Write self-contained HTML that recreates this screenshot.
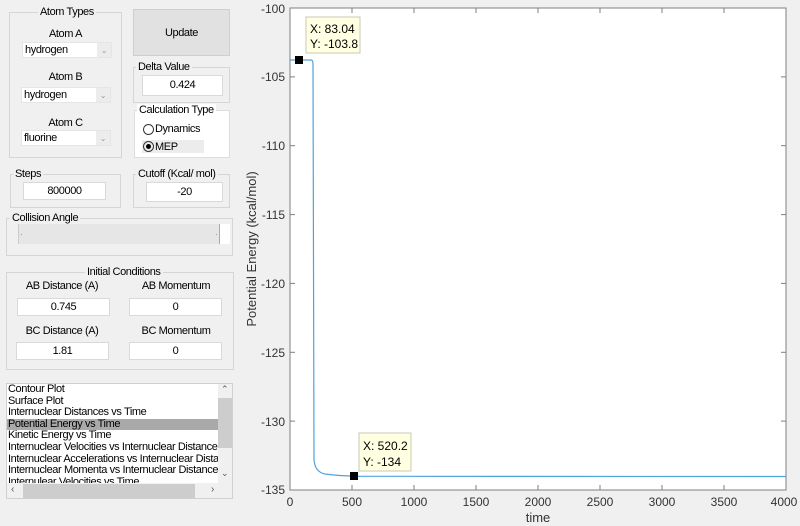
<!DOCTYPE html>
<html><head><style>
body{margin:0;width:800px;height:526px;background:#f0f0f0;font-family:"Liberation Sans",sans-serif;font-size:11px;letter-spacing:-0.4px;color:#000;position:relative;overflow:hidden}
.a{position:absolute}
.grp{position:absolute;border:1px solid #d5d5d5;box-sizing:border-box}
.lg{position:absolute;background:#f0f0f0;padding:0 2px;top:-7px;font-size:11px}
.ed{position:absolute;background:#fff;border:1px solid #d9d9d9;box-sizing:border-box;text-align:center;font-size:11px;line-height:19px}
.dd{position:absolute;background:#fff;border:1px solid #e5e5e5;box-sizing:border-box;font-size:11px;line-height:15px;padding-left:2px}
.dd:after{content:"";position:absolute;right:0;top:0;width:14px;height:100%;background:#ececec}
.dd span{position:absolute;right:4px;top:0;z-index:1;color:#999;font-size:8px}
.c{text-align:center}
</style></head><body>
<div class="grp" style="left:9px;top:12px;width:113px;height:146px"><div class="lg" style="left:28px">Atom Types</div></div>
<div class="a c" style="left:9px;top:28px;width:113px">Atom A</div>
<div class="dd" style="left:22px;top:42px;width:90px;height:16px">hydrogen<span>&#8964;</span></div>
<div class="a c" style="left:9px;top:71px;width:113px">Atom B</div>
<div class="dd" style="left:21px;top:87px;width:90px;height:16px">hydrogen<span>&#8964;</span></div>
<div class="a c" style="left:9px;top:117px;width:113px">Atom C</div>
<div class="dd" style="left:21px;top:130px;width:90px;height:16px">fluorine<span>&#8964;</span></div>
<div class="a c" style="left:133px;top:9px;width:97px;height:47px;background:#e1e1e1;border:1px solid #cfcfcf;box-sizing:border-box;line-height:46px">Update</div>
<div class="grp" style="left:133px;top:67px;width:97px;height:36px"><div class="lg" style="left:2px">Delta Value</div></div>
<div class="ed" style="left:142px;top:75px;width:81px;height:21px">0.424</div>
<div class="grp" style="left:134px;top:110px;width:96px;height:48px;background:#fff;border-color:#ddd"><div class="lg" style="left:2px;background:#fff">Calculation Type</div></div>
<div class="a" style="left:142px;top:140px;width:62px;height:13px;background:#ececec"></div>
<div class="a" style="left:143px;top:124px;width:11px;height:11px;border:1px solid #333;border-radius:50%;box-sizing:border-box"></div>
<div class="a" style="left:155px;top:123px">Dynamics</div>
<div class="a" style="left:143px;top:141px;width:11px;height:11px;border:1px solid #333;border-radius:50%;box-sizing:border-box"></div>
<div class="a" style="left:146px;top:144px;width:5px;height:5px;background:#000;border-radius:50%"></div>
<div class="a" style="left:155px;top:141px">MEP</div>
<div class="grp" style="left:10px;top:174px;width:111px;height:34px"><div class="lg" style="left:2px">Steps</div></div>
<div class="ed" style="left:23px;top:182px;width:83px;height:18px;line-height:17px">800000</div>
<div class="grp" style="left:133px;top:174px;width:97px;height:34px"><div class="lg" style="left:2px">Cutoff (Kcal/ mol)</div></div>
<div class="ed" style="left:146px;top:182px;width:77px;height:20px">-20</div>
<div class="grp" style="left:6px;top:218px;width:227px;height:38px"><div class="lg" style="left:3px">Collision Angle</div></div>
<div class="a" style="left:18px;top:224px;width:212px;height:20px;background:#fff"></div>
<div class="a" style="left:18px;top:224px;width:200px;height:20px;background:#e6e6e6;border-right:1px solid #aaa;border-left:1px solid #ccc"></div>
<div class="a" style="left:20px;top:230px;font-size:8px;color:#777">&#183;</div>
<div class="a" style="left:215px;top:230px;font-size:8px;color:#777">&#183;</div>
<div class="grp" style="left:6px;top:272px;width:228px;height:98px"><div class="lg" style="left:78px">Initial Conditions</div></div>
<div class="a c" style="left:14px;top:280px;width:96px">AB Distance (A)</div>
<div class="a c" style="left:128px;top:280px;width:96px">AB Momentum</div>
<div class="ed" style="left:17px;top:298px;width:93px;height:18px;line-height:17px">0.745</div>
<div class="ed" style="left:129px;top:298px;width:93px;height:18px;line-height:17px">0</div>
<div class="a c" style="left:14px;top:325px;width:96px">BC Distance (A)</div>
<div class="a c" style="left:128px;top:325px;width:96px">BC Momentum</div>
<div class="ed" style="left:16px;top:342px;width:93px;height:18px;line-height:17px">1.81</div>
<div class="ed" style="left:129px;top:342px;width:93px;height:18px;line-height:17px">0</div>
<div class="a" style="left:6px;top:383px;width:227px;height:116px;background:#fff;border:1px solid #d0d0d0;box-sizing:border-box;overflow:hidden">
<div style="line-height:11.6px;font-size:11px;padding-left:1px;white-space:nowrap;width:210px;overflow:hidden">
Contour Plot<br>Surface Plot<br>Internuclear Distances vs Time<br><div style="background:#a9a9a9;margin-left:-1px;padding-left:1px">Potential Energy vs Time</div>Kinetic Energy vs Time<br>Internuclear Velocities vs Internuclear Distance<br>Internuclear Accelerations vs Internuclear Distance<br>Internuclear Momenta vs Internuclear Distance<br>Internulear Velocities vs Time</div>
<div class="a" style="left:211px;top:0;width:15px;height:100px;background:#f0f0f0"></div>
<div class="a" style="left:211px;top:14px;width:15px;height:50px;background:#cdcdcd"></div>
<div class="a" style="left:214px;top:0;font-size:9px;color:#555">&#8963;</div>
<div class="a" style="left:214px;top:84px;font-size:9px;color:#555">&#8964;</div>
<div class="a" style="left:0;top:99px;width:226px;height:16px;background:#f0f0f0"></div>
<div class="a" style="left:16px;top:100px;width:172px;height:15px;background:#cdcdcd"></div>
<div class="a" style="left:4px;top:100px;font-size:10px;color:#555">&#8249;</div>
<div class="a" style="left:204px;top:100px;font-size:10px;color:#555">&#8250;</div>
</div>
<svg class="a" style="left:0;top:0;letter-spacing:0" width="800" height="526">
<rect x="290" y="8" width="496" height="482" fill="#fff" stroke="#7f7f7f" stroke-width="1"/>
<g stroke="#7f7f7f" stroke-width="1">
<line x1="290" y1="76.9" x2="295" y2="76.9"/><line x1="290" y1="145.7" x2="295" y2="145.7"/><line x1="290" y1="214.6" x2="295" y2="214.6"/><line x1="290" y1="283.4" x2="295" y2="283.4"/><line x1="290" y1="352.3" x2="295" y2="352.3"/><line x1="290" y1="421.1" x2="295" y2="421.1"/>
<line x1="352" y1="490" x2="352" y2="485"/><line x1="414" y1="490" x2="414" y2="485"/><line x1="476" y1="490" x2="476" y2="485"/><line x1="538" y1="490" x2="538" y2="485"/><line x1="600" y1="490" x2="600" y2="485"/><line x1="662" y1="490" x2="662" y2="485"/><line x1="724" y1="490" x2="724" y2="485"/>
<line x1="352" y1="8" x2="352" y2="13"/><line x1="414" y1="8" x2="414" y2="13"/><line x1="476" y1="8" x2="476" y2="13"/><line x1="538" y1="8" x2="538" y2="13"/><line x1="600" y1="8" x2="600" y2="13"/><line x1="662" y1="8" x2="662" y2="13"/><line x1="724" y1="8" x2="724" y2="13"/>
<line x1="786" y1="76.9" x2="781" y2="76.9"/><line x1="786" y1="145.7" x2="781" y2="145.7"/><line x1="786" y1="214.6" x2="781" y2="214.6"/><line x1="786" y1="283.4" x2="781" y2="283.4"/><line x1="786" y1="352.3" x2="781" y2="352.3"/><line x1="786" y1="421.1" x2="781" y2="421.1"/>
</g>
<path d="M290,60 L311,60 Q313,60 313,64 L314,460 Q315,472 325,474 Q340,476 360,476.3 L786,476.5" fill="none" stroke="#4ea3dc" stroke-width="1.2"/>
<g font-family="Liberation Sans,sans-serif" font-size="12" fill="#333" text-anchor="end">
<text x="285" y="13">-100</text><text x="285" y="81">-105</text><text x="285" y="150">-110</text><text x="285" y="219">-115</text><text x="285" y="288">-120</text><text x="285" y="357">-125</text><text x="285" y="426">-130</text><text x="285" y="494">-135</text>
</g>
<g font-family="Liberation Sans,sans-serif" font-size="12" fill="#333" text-anchor="middle">
<text x="290" y="506">0</text><text x="352" y="506">500</text><text x="414" y="506">1000</text><text x="476" y="506">1500</text><text x="538" y="506">2000</text><text x="600" y="506">2500</text><text x="662" y="506">3000</text><text x="724" y="506">3500</text><text x="784" y="506">4000</text>
<text x="538" y="522" font-size="13">time</text>
<text transform="translate(256,249) rotate(-90)" font-size="13">Potential Energy (kcal/mol)</text>
</g>
<rect x="306" y="17" width="54" height="36" fill="#ffffe1" stroke="#c8c8b4"/>
<rect x="359" y="433" width="52" height="38" fill="#ffffe1" stroke="#c8c8b4"/>
<g font-family="Liberation Sans,sans-serif" font-size="12" fill="#000">
<text x="310" y="33">X: 83.04</text><text x="310" y="48">Y: -103.8</text>
<text x="363" y="450">X: 520.2</text><text x="363" y="466">Y: -134</text>
</g>
<rect x="295" y="56" width="8" height="8" fill="#000"/>
<rect x="350" y="472" width="8" height="8" fill="#000"/>
</svg>
</body></html>
